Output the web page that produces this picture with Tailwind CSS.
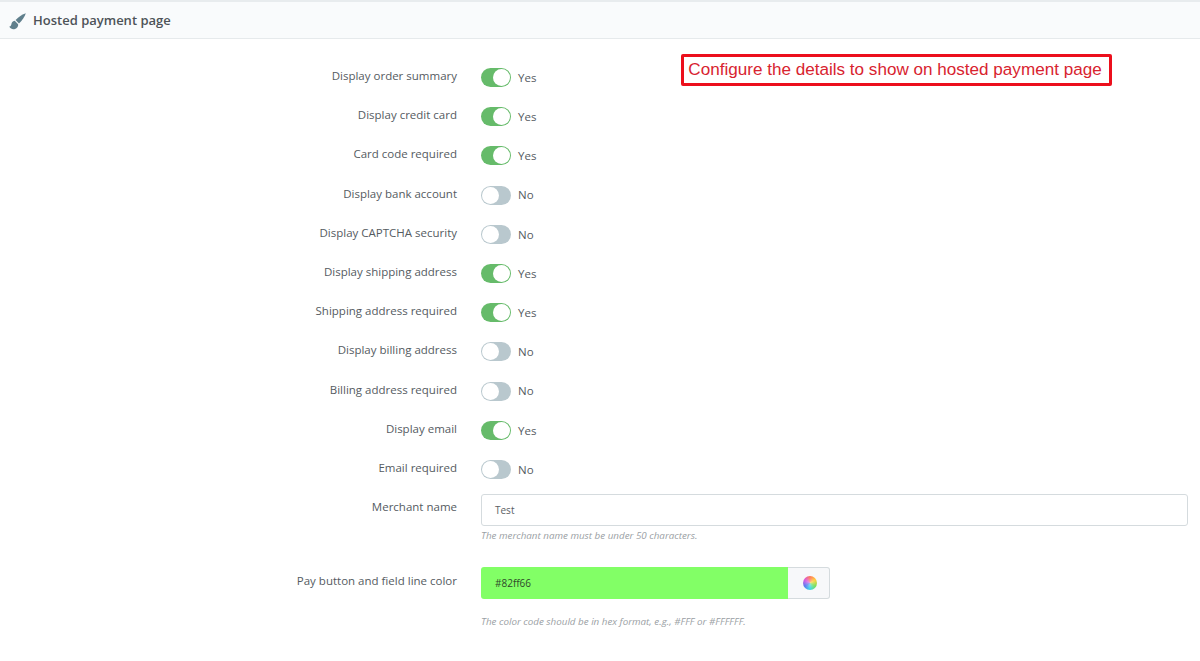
<!DOCTYPE html>
<html>
<head>
<meta charset="utf-8">
<script src="https://cdn.jsdelivr.net/npm/@tailwindcss/browser@4"></script>
</head>
<body class="bg-white">
<div class="relative w-[1200px] h-[661px] overflow-hidden bg-white font-['Open_Sans',sans-serif] text-[11.5px] text-[#555b5f]">
  <div class="h-[39px] border-t-2 border-b border-t-[#e8ecee] border-b-[#e6eaec] bg-[#f9fbfc] flex items-center pl-[9px] gap-[7px]">
    <svg class="w-[17px] h-[17px] mt-[2px]" viewBox="0 0 16 16"><path d="M15.8 0.2C13 1 9 3.4 6.2 6.6L9.4 9.8C12.6 7 15 3 15.8 0.2Z" fill="#5f7f8c"/><path d="M5.4 7.4C3.2 7.6 2.6 9.2 2.2 10.8C1.9 12 1.2 12.6 0.2 12.8C1.4 15 3.4 15.6 5 15.2C7.6 14.6 9 12.6 8.6 10.6Z" fill="#5f7f8c"/></svg>
    <span class="text-[13px] font-semibold text-[#4d5358] mt-[1px]">Hosted payment page</span>
  </div>

  <div class="pt-[19px] flex flex-col">
    <div class="h-[39.2px] flex"><div class="w-[457px] text-right leading-[38px] -mt-[1px]">Display order summary</div><div class="ml-[24px] h-[39px] flex items-center gap-[7px]"><span class="relative w-[30px] h-[19px] rounded-full bg-[#66bb6a]"><span class="absolute right-[1px] top-[1px] w-[17px] h-[17px] rounded-full bg-white"></span></span><span>Yes</span></div></div>
    <div class="h-[39.2px] flex"><div class="w-[457px] text-right leading-[38px] -mt-[1px]">Display credit card</div><div class="ml-[24px] h-[39px] flex items-center gap-[7px]"><span class="relative w-[30px] h-[19px] rounded-full bg-[#66bb6a]"><span class="absolute right-[1px] top-[1px] w-[17px] h-[17px] rounded-full bg-white"></span></span><span>Yes</span></div></div>
    <div class="h-[39.2px] flex"><div class="w-[457px] text-right leading-[38px] -mt-[1px]">Card code required</div><div class="ml-[24px] h-[39px] flex items-center gap-[7px]"><span class="relative w-[30px] h-[19px] rounded-full bg-[#66bb6a]"><span class="absolute right-[1px] top-[1px] w-[17px] h-[17px] rounded-full bg-white"></span></span><span>Yes</span></div></div>
    <div class="h-[39.2px] flex"><div class="w-[457px] text-right leading-[38px] -mt-[1px]">Display bank account</div><div class="ml-[24px] h-[39px] flex items-center gap-[7px]"><span class="relative w-[30px] h-[19px] rounded-full bg-[#b9c8ce]"><span class="absolute left-[1px] top-[1px] w-[17px] h-[17px] rounded-full bg-white"></span></span><span>No</span></div></div>
    <div class="h-[39.2px] flex"><div class="w-[457px] text-right leading-[38px] -mt-[1px]">Display CAPTCHA security</div><div class="ml-[24px] h-[39px] flex items-center gap-[7px]"><span class="relative w-[30px] h-[19px] rounded-full bg-[#b9c8ce]"><span class="absolute left-[1px] top-[1px] w-[17px] h-[17px] rounded-full bg-white"></span></span><span>No</span></div></div>
    <div class="h-[39.2px] flex"><div class="w-[457px] text-right leading-[38px] -mt-[1px]">Display shipping address</div><div class="ml-[24px] h-[39px] flex items-center gap-[7px]"><span class="relative w-[30px] h-[19px] rounded-full bg-[#66bb6a]"><span class="absolute right-[1px] top-[1px] w-[17px] h-[17px] rounded-full bg-white"></span></span><span>Yes</span></div></div>
    <div class="h-[39.2px] flex"><div class="w-[457px] text-right leading-[38px] -mt-[1px]">Shipping address required</div><div class="ml-[24px] h-[39px] flex items-center gap-[7px]"><span class="relative w-[30px] h-[19px] rounded-full bg-[#66bb6a]"><span class="absolute right-[1px] top-[1px] w-[17px] h-[17px] rounded-full bg-white"></span></span><span>Yes</span></div></div>
    <div class="h-[39.2px] flex"><div class="w-[457px] text-right leading-[38px] -mt-[1px]">Display billing address</div><div class="ml-[24px] h-[39px] flex items-center gap-[7px]"><span class="relative w-[30px] h-[19px] rounded-full bg-[#b9c8ce]"><span class="absolute left-[1px] top-[1px] w-[17px] h-[17px] rounded-full bg-white"></span></span><span>No</span></div></div>
    <div class="h-[39.2px] flex"><div class="w-[457px] text-right leading-[38px] -mt-[1px]">Billing address required</div><div class="ml-[24px] h-[39px] flex items-center gap-[7px]"><span class="relative w-[30px] h-[19px] rounded-full bg-[#b9c8ce]"><span class="absolute left-[1px] top-[1px] w-[17px] h-[17px] rounded-full bg-white"></span></span><span>No</span></div></div>
    <div class="h-[39.2px] flex"><div class="w-[457px] text-right leading-[38px] -mt-[1px]">Display email</div><div class="ml-[24px] h-[39px] flex items-center gap-[7px]"><span class="relative w-[30px] h-[19px] rounded-full bg-[#66bb6a]"><span class="absolute right-[1px] top-[1px] w-[17px] h-[17px] rounded-full bg-white"></span></span><span>Yes</span></div></div>
    <div class="h-[39.2px] flex"><div class="w-[457px] text-right leading-[38px] -mt-[1px]">Email required</div><div class="ml-[24px] h-[39px] flex items-center gap-[7px]"><span class="relative w-[30px] h-[19px] rounded-full bg-[#b9c8ce]"><span class="absolute left-[1px] top-[1px] w-[17px] h-[17px] rounded-full bg-white"></span></span><span>No</span></div></div>

    <div class="flex mt-[5px]">
      <div class="w-[457px] text-right leading-[16px] pt-[5px]">Merchant name</div>
      <div class="ml-[24px] w-[707px]">
        <div class="h-[32px] border border-[#d5dbde] rounded-[3px] flex items-center pl-[13px] text-[10px] text-[#5a6064]">Test</div>
        <div class="mt-[3px] text-[9.8px] italic text-[#9aa0a4] leading-[14px]">The merchant name must be under 50 characters.</div>
      </div>
    </div>

    <div class="flex mt-[24px]">
      <div class="w-[457px] text-right leading-[16px] pt-[6px]">Pay button and field line color</div>
      <div class="ml-[24px] w-[349px]">
        <div class="h-[32px] flex">
          <div class="w-[307px] bg-[#82ff66] rounded-l-[3px] flex items-center pl-[14px] text-[10px] text-[#2f4a2a]">#82ff66</div>
          <div class="flex-1 bg-[#f7f8fa] border border-l-0 border-[#d5dbde] rounded-r-[3px] flex items-center justify-center pl-[2px]">
            <span class="w-[14px] h-[14px] rounded-full bg-[radial-gradient(circle,#ffffff66_0%,#ffffff00_60%),conic-gradient(#ff7a5b,#ffd23c,#7be05a,#3fd8e8,#5a7bf0,#d95ae0,#ff7a5b)]"></span>
          </div>
        </div>
        <div class="mt-[16px] text-[9.8px] italic text-[#9aa0a4] leading-[14px]">The color code should be in hex format, e.g., #FFF or #FFFFFF.</div>
      </div>
    </div>
  </div>

  <div class="absolute left-[681px] top-[54px] w-[431px] h-[32px] border-[3px] border-[#ec0f1c] rounded-[2px] flex items-center justify-center pr-[3px] bg-white font-['Liberation_Sans',sans-serif] text-[17.1px] text-[#d8232f] whitespace-nowrap">Configure the details to show on hosted payment page</div>
</div>
</body>
</html>
